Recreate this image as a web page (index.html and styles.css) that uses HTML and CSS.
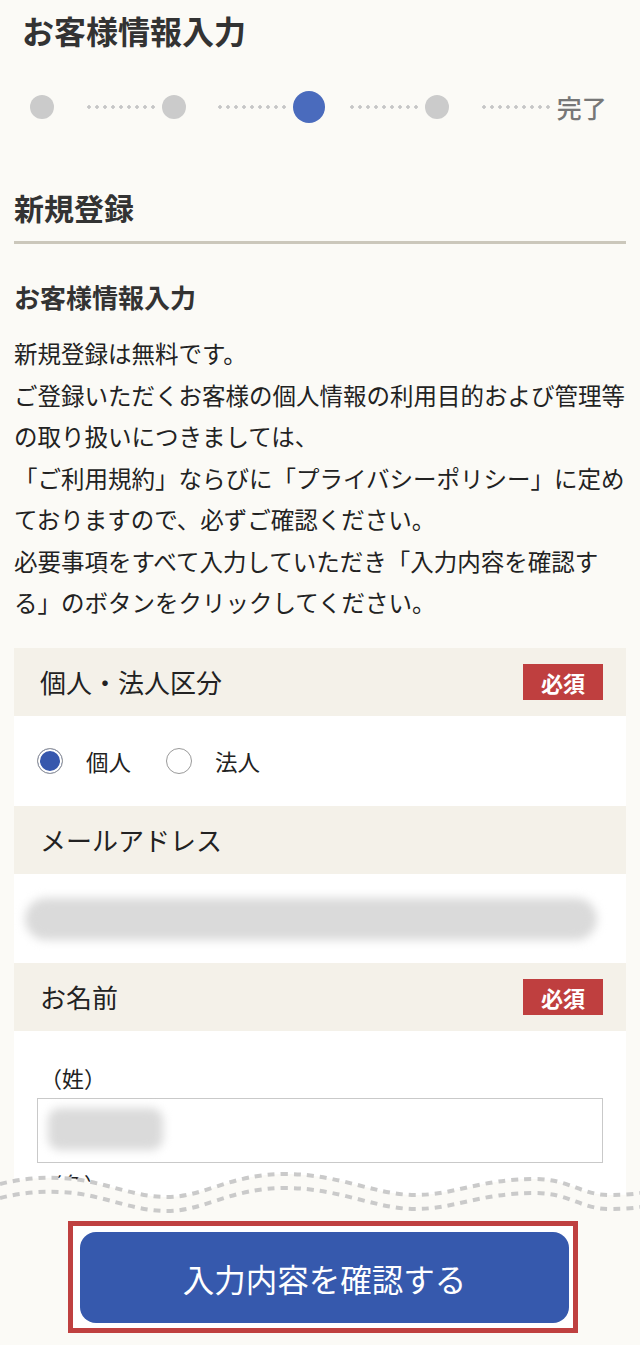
FILE: index.html
```html
<!DOCTYPE html>
<html lang="ja">
<head>
  <meta charset="UTF-8" />
  <meta name="viewport" content="width=device-width, initial-scale=1.0"/>
  <title>お客様情報入力</title>
  <link rel="stylesheet" href="styles.css">
</head>
<body>

  <header class="page-head">
    <h1 class="page-title">お客様情報入力</h1>
    <ol class="steps">
      <li class="step"><span class="step-dot"></span><span class="step-line"></span></li>
      <li class="step"><span class="step-dot"></span><span class="step-line"></span></li>
      <li class="step current"><span class="step-dot"></span><span class="step-line"></span></li>
      <li class="step"><span class="step-dot"></span><span class="step-line"></span></li>
      <li class="step-end">完了</li>
    </ol>
  </header>

  <main class="content">
    <h2 class="section-title">新規登録</h2>
    <h3 class="sub-title">お客様情報入力</h3>
    <p class="lead">
      新規登録は無料です。<br>
      ご登録いただくお客様の個人情報の利用目的および管理等の取り扱いにつきましては、<br>
      「ご利用規約」ならびに「プライバシーポリシー」に定めておりますので、必ずご確認ください。<br>
      必要事項をすべて入力していただき「入力内容を確認する」のボタンをクリックしてください。
    </p>

    <div class="form">
      <div class="form-head">
        <span class="form-label">個人・法人区分</span>
        <span class="req">必須</span>
      </div>
      <div class="form-body radios">
        <label class="radio"><input type="radio" name="kind" checked><span>個人</span></label>
        <label class="radio"><input type="radio" name="kind"><span>法人</span></label>
      </div>

      <div class="form-head">
        <span class="form-label">メールアドレス</span>
      </div>
      <div class="form-body mail">
        <div class="blur blur-mail"></div>
      </div>

      <div class="form-head">
        <span class="form-label">お名前</span>
        <span class="req">必須</span>
      </div>
      <div class="form-body name">
        <p class="field-label">（姓）</p>
        <div class="field-input"><div class="blur blur-name"></div></div>
        <p class="field-label next">（名）</p>
        <div class="field-input"></div>
      </div>
    </div>
  </main>

  <footer class="submit-bar">
    <svg class="wave" width="640" height="48" viewBox="0 0 640 48">
      <path class="wave-fill" d="M0,19 C20,14 40,12 60,13 C100,14 130,32 167,32 C205,32 230,9 285,9 C340,9 375,30 415,30 C455,30 480,14 535,14 C570,14 580,30 610,30 C625,30 635,29 640,28 L640,48 L0,48 Z"/>
      <path class="wave-line" d="M0,19 C20,14 40,12 60,13 C100,14 130,32 167,32 C205,32 230,9 285,9 C340,9 375,30 415,30 C455,30 480,14 535,14 C570,14 580,30 610,30 C625,30 635,29 640,28"/>
      <path class="wave-line" d="M0,33 C20,28 40,26 60,27 C100,28 130,46 167,46 C205,46 230,23 285,23 C340,23 375,44 415,44 C455,44 480,28 535,28 C570,28 580,44 610,44 C625,44 635,43 640,42"/>
    </svg>
    <div class="submit-area">
      <div class="submit-frame">
        <button class="submit-btn" type="button">入力内容を確認する</button>
      </div>
    </div>
  </footer>

</body>
</html>
```

FILE: styles.css
```css
* {
  box-sizing: border-box;
  margin: 0;
  padding: 0;
}

body {
  background: #fbfaf6;
  color: #222;
  font-family: "Noto Sans CJK JP", "Noto Sans", sans-serif;
  overflow: hidden;
}

.page-title {
  padding: 10px 0 0 22px;
  font-size: 32px;
  line-height: 40px;
  font-weight: 700;
  color: #333;
}

/* progress steps */
.steps {
  list-style: none;
  display: flex;
  align-items: center;
  height: 34px;
  margin-top: 40px;
  padding-left: 30px;
}

.step {
  flex: 0 0 131.7px;
  display: flex;
  align-items: center;
}

.step-dot {
  width: 24px;
  height: 24px;
  border-radius: 50%;
  background: #cbcbcb;
}

.step.current .step-dot {
  width: 32px;
  height: 32px;
  background: #4a6bbd;
}

.step-line {
  margin-left: auto;
  margin-right: 4px;
  width: 73px;
  height: 4px;
  background-image: radial-gradient(circle, #c6c6c6 1.5px, transparent 2px);
  background-size: 8px 4px;
}

.step-end {
  font-size: 25px;
  line-height: 34px;
  font-weight: 500;
  color: #777;
}

/* main text */
.content {
  margin: 0 14px;
}

.section-title {
  margin-top: 63px;
  padding-bottom: 14px;
  border-bottom: 3px solid #cbc7bb;
  font-size: 30px;
  line-height: 40px;
  font-weight: 700;
  color: #333;
}

.sub-title {
  margin-top: 35px;
  font-size: 26px;
  line-height: 36px;
  font-weight: 700;
  color: #333;
}

.lead {
  margin-top: 18px;
  font-size: 23.5px;
  line-height: 41.5px;
}

/* form */
.form {
  margin-top: 24.5px;
  background: #fff;
}

.form-head {
  display: flex;
  align-items: center;
  justify-content: space-between;
  height: 68px;
  padding: 0 23px 0 26px;
  background: #f4f1e9;
}

.form-label {
  font-size: 26px;
  line-height: 34px;
}

.req {
  width: 80px;
  height: 36px;
  display: flex;
  align-items: center;
  justify-content: center;
  background: #bf3f3f;
  color: #fff;
  font-size: 22px;
  font-weight: 700;
}

.radios {
  height: 90px;
  display: flex;
  align-items: center;
  gap: 35px;
  padding-left: 23px;
}

.radio {
  display: flex;
  align-items: center;
  gap: 23px;
  font-size: 22.5px;
}

.radio input {
  appearance: none;
  width: 26px;
  height: 26px;
  border: 1.5px solid #9a9a9a;
  border-radius: 50%;
  background: #fff;
}

.radio input:checked {
  background: #3657ad;
  box-shadow: inset 0 0 0 2px #fff;
}

.mail {
  height: 89px;
  display: flex;
  align-items: center;
  padding: 0 29px 0 11px;
}

.blur {
  background: #dadada;
  filter: blur(5px);
}

.blur-mail {
  width: 100%;
  height: 42px;
  border-radius: 22px;
}

.name {
  padding: 30px 23px 20px;
}

.field-label {
  font-size: 22px;
  line-height: 32px;
  padding-left: 3px;
}

.field-label.next {
  margin-top: 4px;
}

.field-input {
  margin-top: 5px;
  height: 65px;
  border: 1px solid #c9c9c9;
  padding: 9px 10px;
}

.blur-name {
  width: 115px;
  height: 42px;
  border-radius: 12px;
}

/* sticky submit bar */
.submit-bar {
  position: fixed;
  left: 0;
  right: 0;
  bottom: 0;
}

.wave {
  display: block;
}

.wave-fill {
  fill: #fbfaf6;
}

.wave-line {
  fill: none;
  stroke: #cacaca;
  stroke-width: 4;
  stroke-dasharray: 7 6;
}

.submit-area {
  background: #fbfaf6;
  padding: 8px 0 12px;
}

.submit-frame {
  width: 510px;
  margin-left: 68px;
  border: 5px solid #bf4040;
  padding: 6px 4px 5px 7px;
  background: #fff;
}

.submit-btn {
  display: block;
  width: 100%;
  height: 91px;
  border: none;
  border-radius: 16px;
  background: #3659ad;
  color: #fff;
  font-family: inherit;
  font-size: 31.5px;
  font-weight: 400;
}
```
